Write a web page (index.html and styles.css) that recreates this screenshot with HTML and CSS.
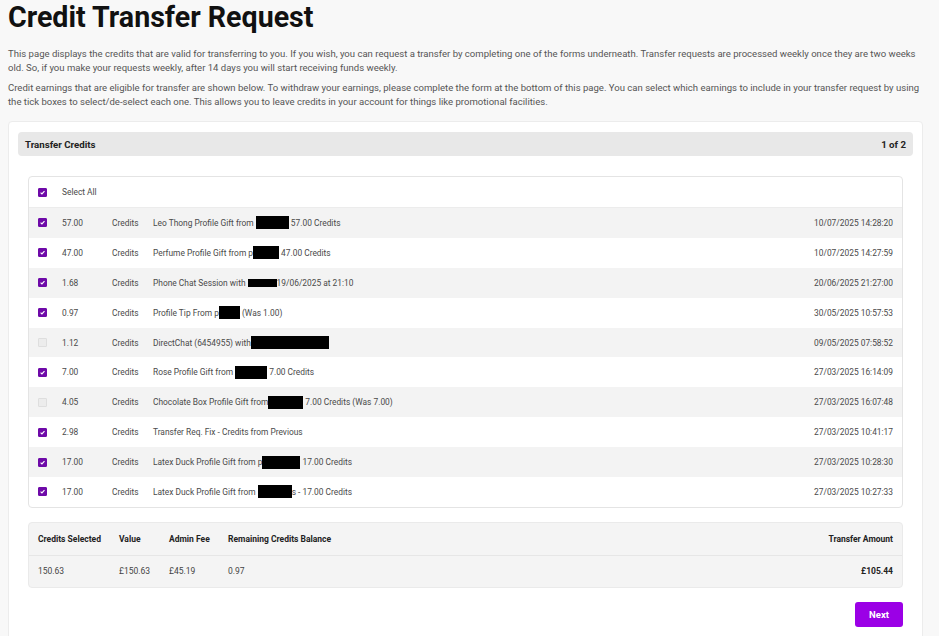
FILE: index.html
```html
<!DOCTYPE html>
<html lang="en">
<head>
    <meta charset="UTF-8">
    <title>Credit Transfer Request</title>
    <link rel="stylesheet" href="styles.css">
</head>
<body>
<h1 class="title">Credit Transfer Request</h1>
<p class="intro">This page displays the credits that are valid for transferring to you. If you wish, you can request a transfer by completing one of the forms underneath. Transfer requests are processed weekly once they are two weeks old. So, if you make your requests weekly, after 14 days you will start receiving funds weekly.</p>
<p class="intro">Credit earnings that are eligible for transfer are shown below. To withdraw your earnings, please complete the form at the bottom of this page. You can select which earnings to include in your transfer request by using the tick boxes to select/de-select each one. This allows you to leave credits in your account for things like promotional facilities.</p>

<div class="card">
    <div class="card-head">
        <span>Transfer Credits</span>
        <span>1 of 2</span>
    </div>

    <div class="list">
        <div class="row row-all">
            <span class="tick on"><svg viewBox="0 0 10 10"><path d="M2.3 5.2 L4.2 7 L7.8 3"/></svg></span>
            <span>Select All</span>
        </div>
        <div class="row">
            <span class="tick on"><svg viewBox="0 0 10 10"><path d="M2.3 5.2 L4.2 7 L7.8 3"/></svg></span>
            <span class="amt">57.00</span><span class="unit">Credits</span>
            <span class="desc">Leo Thong Profile Gift from <i class="redact" style="width:33px"></i> 57.00 Credits</span>
            <span class="date">10/07/2025 14:28:20</span>
        </div>
        <div class="row">
            <span class="tick on"><svg viewBox="0 0 10 10"><path d="M2.3 5.2 L4.2 7 L7.8 3"/></svg></span>
            <span class="amt">47.00</span><span class="unit">Credits</span>
            <span class="desc">Perfume Profile Gift from p<i class="redact" style="width:26px"></i> 47.00 Credits</span>
            <span class="date">10/07/2025 14:27:59</span>
        </div>
        <div class="row">
            <span class="tick on"><svg viewBox="0 0 10 10"><path d="M2.3 5.2 L4.2 7 L7.8 3"/></svg></span>
            <span class="amt">1.68</span><span class="unit">Credits</span>
            <span class="desc">Phone Chat Session with <i class="redact thin" style="width:29px"></i>19/06/2025 at 21:10</span>
            <span class="date">20/06/2025 21:27:00</span>
        </div>
        <div class="row">
            <span class="tick on"><svg viewBox="0 0 10 10"><path d="M2.3 5.2 L4.2 7 L7.8 3"/></svg></span>
            <span class="amt">0.97</span><span class="unit">Credits</span>
            <span class="desc">Profile Tip From p<i class="redact" style="width:21px"></i> (Was 1.00)</span>
            <span class="date">30/05/2025 10:57:53</span>
        </div>
        <div class="row">
            <span class="tick"></span>
            <span class="amt">1.12</span><span class="unit">Credits</span>
            <span class="desc">DirectChat (6454955) with<i class="redact" style="width:78px"></i></span>
            <span class="date">09/05/2025 07:58:52</span>
        </div>
        <div class="row">
            <span class="tick on"><svg viewBox="0 0 10 10"><path d="M2.3 5.2 L4.2 7 L7.8 3"/></svg></span>
            <span class="amt">7.00</span><span class="unit">Credits</span>
            <span class="desc">Rose Profile Gift from <i class="redact" style="width:32px"></i> 7.00 Credits</span>
            <span class="date">27/03/2025 16:14:09</span>
        </div>
        <div class="row">
            <span class="tick"></span>
            <span class="amt">4.05</span><span class="unit">Credits</span>
            <span class="desc">Chocolate Box Profile Gift from<i class="redact" style="width:35px"></i> 7.00 Credits (Was 7.00)</span>
            <span class="date">27/03/2025 16:07:48</span>
        </div>
        <div class="row">
            <span class="tick on"><svg viewBox="0 0 10 10"><path d="M2.3 5.2 L4.2 7 L7.8 3"/></svg></span>
            <span class="amt">2.98</span><span class="unit">Credits</span>
            <span class="desc">Transfer Req. Fix - Credits from Previous</span>
            <span class="date">27/03/2025 10:41:17</span>
        </div>
        <div class="row">
            <span class="tick on"><svg viewBox="0 0 10 10"><path d="M2.3 5.2 L4.2 7 L7.8 3"/></svg></span>
            <span class="amt">17.00</span><span class="unit">Credits</span>
            <span class="desc">Latex Duck Profile Gift from p<i class="redact" style="width:38px"></i> 17.00 Credits</span>
            <span class="date">27/03/2025 10:28:30</span>
        </div>
        <div class="row">
            <span class="tick on"><svg viewBox="0 0 10 10"><path d="M2.3 5.2 L4.2 7 L7.8 3"/></svg></span>
            <span class="amt">17.00</span><span class="unit">Credits</span>
            <span class="desc">Latex Duck Profile Gift from <i class="redact" style="width:34px"></i>s - 17.00 Credits</span>
            <span class="date">27/03/2025 10:27:33</span>
        </div>
    </div>

    <div class="summary">
        <div class="sum-row sum-head">
            <span class="c1">Credits Selected</span>
            <span class="c2">Value</span>
            <span class="c3">Admin Fee</span>
            <span class="c4">Remaining Credits Balance</span>
            <span class="c5">Transfer Amount</span>
        </div>
        <div class="sum-row">
            <span class="c1">150.63</span>
            <span class="c2">&pound;150.63</span>
            <span class="c3">&pound;45.19</span>
            <span class="c4">0.97</span>
            <span class="c5 total">&pound;105.44</span>
        </div>
    </div>

    <div class="actions">
        <button class="btn-next">Next</button>
    </div>
</div>
</body>
</html>
```

FILE: styles.css
```css
* {
    margin: 0;
    padding: 0;
    box-sizing: border-box;
}

body {
    background: #f8f8f8;
    font-family: Roboto, "Liberation Sans", sans-serif;
    font-size: 9.55px;
    color: #555;
    padding: 0 8px;
}

.title {
    font-size: 28.6px;
    font-weight: 700;
    color: #111;
    line-height: 34px;
    margin-bottom: 13px;
}

.intro {
    line-height: 14px;
    margin-bottom: 6px;
}

.card {
    margin-top: 12px;
    width: 915px;
    background: #fff;
    border: 1px solid #ececec;
    border-radius: 4px;
    padding: 10px 9px 20px;
}

.card-head {
    display: flex;
    justify-content: space-between;
    align-items: center;
    height: 24px;
    padding: 0 7px;
    background: #e8e8e8;
    border-radius: 4px;
    font-size: 9.7px;
    font-weight: 700;
    color: #222;
}

.list {
    margin: 20px 10px 0;
    border: 1px solid #e4e4e4;
    border-radius: 4px;
    overflow: hidden;
    font-size: 8.4px;
}

.row {
    display: flex;
    align-items: center;
    height: 29.9px;
    padding: 0 9px;
    color: #4a4a4a;
}

.row:nth-child(even) {
    background: #f3f3f3;
}

.row-all {
    height: 31px;
    border-bottom: 1px solid #ececec;
}

.tick {
    width: 9px;
    height: 9px;
    margin-right: 15px;
    border: 1px solid #dedede;
    background: #ececec;
    border-radius: 1px;
    display: flex;
}

.tick.on {
    background: #6e0aa8;
    border-color: #6e0aa8;
}

.tick svg {
    width: 100%;
    height: 100%;
    fill: none;
    stroke: #fff;
    stroke-width: 1.6;
}

.amt {
    width: 50px;
}

.unit {
    width: 41px;
}

.desc {
    flex: 1;
    display: flex;
    align-items: center;
    white-space: pre;
}

.redact {
    display: inline-block;
    height: 13px;
    background: #000;
}

.redact.thin {
    height: 8px;
}

.date {
    text-align: right;
}

.summary {
    margin: 14px 10px 0;
    background: #f4f4f4;
    border: 1px solid #eaeaea;
    border-radius: 4px;
    font-size: 8.5px;
}

.sum-row {
    display: flex;
    align-items: center;
    height: 31px;
    padding: 0 9px;
    color: #444;
}

.sum-head {
    height: 33px;
    font-weight: 700;
    color: #222;
    border-bottom: 1px solid #e6e6e6;
}

.c1 { width: 81px; }
.c2 { width: 50px; }
.c3 { width: 59px; }
.c4 { flex: 1; }
.c5 { text-align: right; }

.total {
    font-weight: 700;
    color: #222;
}

.actions {
    display: flex;
    justify-content: flex-end;
    margin: 14px 10px 0;
}

.btn-next {
    width: 48px;
    height: 25px;
    border: 0;
    border-radius: 3px;
    background: #9b00e6;
    color: #fff;
    font-family: Roboto, "Liberation Sans", sans-serif;
    font-size: 9.5px;
    font-weight: 700;
}
```
